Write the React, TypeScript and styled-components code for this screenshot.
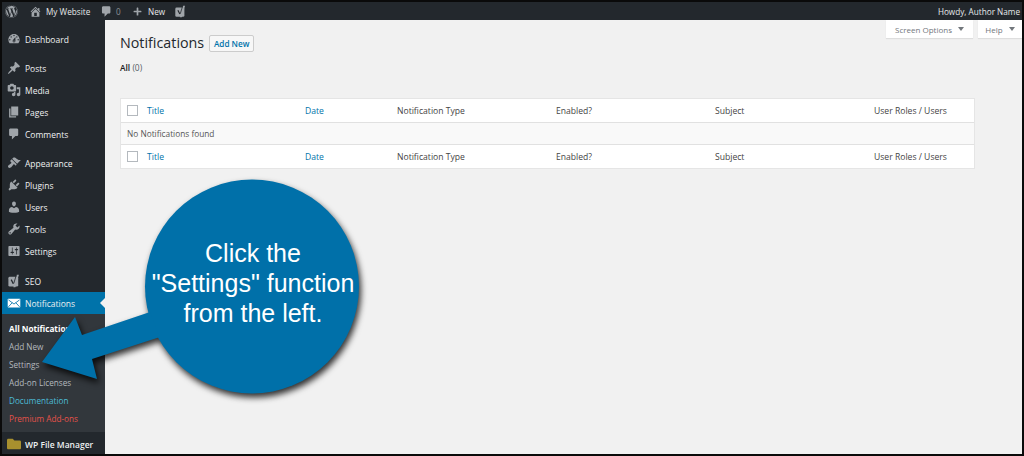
import React from 'react';
import styled, { createGlobalStyle } from 'styled-components';
import { FaWordpress, FaPlus, FaFolder } from 'react-icons/fa';

const GlobalStyle = createGlobalStyle`
  html, body {
    margin: 0;
    padding: 0;
    background: #000;
  }
  body {
    font-family: "Open Sans", "Liberation Sans", sans-serif;
    font-size: 8.6px;
  }
  * {
    box-sizing: border-box;
  }
`;

const Frame = styled.div`
  position: relative;
  width: 1024px;
  height: 456px;
  overflow: hidden;
  border: 2px solid #0a0a0a;
  display: flex;
  flex-direction: column;
  background: #f1f1f1;
`;

const AdminBar = styled.header`
  height: 18px;
  flex: none;
  background: #23282d;
  display: flex;
  align-items: center;
  padding: 0 2px 0 3px;
  font-size: 8.2px;
`;

const BarItem = styled.span<{ $gap?: number; $width?: number }>`
  display: flex;
  align-items: center;
  gap: ${(p) => p.$gap ?? 4}px;
  width: ${(p) => (p.$width ? `${p.$width}px` : 'auto')};
  color: #e6e8ea;
  svg {
    color: #a0a5aa;
    flex: none;
  }
`;

const Muted = styled.span`
  color: #8d9297;
`;

const Howdy = styled.span`
  margin-left: auto;
  color: #e6e8ea;
`;

const Body = styled.div`
  flex: 1;
  display: flex;
  min-height: 0;
`;

const Sidebar = styled.nav`
  width: 103px;
  flex: none;
  background: #23282d;
  padding-top: 8px;
`;

const MenuGroup = styled.div`
  margin-bottom: 7px;
  &:nth-child(3) {
    margin-bottom: 8px;
  }
`;

const MenuRow = styled.div<{ $active?: boolean }>`
  position: relative;
  height: 22px;
  display: flex;
  align-items: center;
  padding-left: 5px;
  gap: 4px;
  color: #eef0f1;
  font-size: 8.5px;
  white-space: nowrap;
  background: ${(p) => (p.$active ? '#0073aa' : 'transparent')};
  svg {
    flex: none;
    color: ${(p) => (p.$active ? '#fff' : '#a0a5aa')};
  }
  ${(p) =>
    p.$active &&
    `&::after {
      content: '';
      position: absolute;
      right: 0;
      top: 6px;
      border: 5px solid transparent;
      border-right-color: #f1f1f1;
      border-left-width: 0;
    }`}
`;

const SubMenu = styled.div`
  background: #32373c;
  padding: 5px 0 5px 7px;
`;

const SubItem = styled.div<{ $color?: string; $bold?: boolean }>`
  height: 18px;
  display: flex;
  align-items: center;
  font-size: 8.2px;
  white-space: nowrap;
  color: ${(p) => p.$color ?? '#b4b9be'};
  font-weight: ${(p) => (p.$bold ? 700 : 400)};
`;

const FileManagerRow = styled(MenuRow)`
  margin-top: 1px;
  font-weight: 600;
  font-size: 8.5px;
  svg {
    color: #a8902e;
  }
`;

const Main = styled.main`
  flex: 1;
  min-width: 0;
  padding-left: 15px;
  position: relative;
`;

const ScreenTabs = styled.div`
  display: flex;
  justify-content: flex-end;
  gap: 5px;
`;

const ScreenTab = styled.div<{ $width: number }>`
  width: ${(p) => p.$width}px;
  height: 18px;
  background: #fff;
  box-shadow: 0 1px 1px rgba(0, 0, 0, 0.08);
  color: #72777c;
  font-size: 8px;
  display: flex;
  align-items: center;
  justify-content: center;
  gap: 6px;
  &::after {
    content: '';
    border: 3px solid transparent;
    border-top: 4px solid #72777c;
    border-bottom-width: 0;
  }
`;

const TitleRow = styled.div`
  display: flex;
  align-items: center;
  gap: 5px;
  margin-top: -3px;
  height: 17px;
`;

const PageTitle = styled.h1`
  margin: 0 0 2px;
  font-size: 14.3px;
  font-weight: 400;
  color: #23282d;
`;

const AddNew = styled.span`
  height: 17px;
  width: 45px;
  display: flex;
  align-items: center;
  justify-content: center;
  background: #f7f7f7;
  border: 1px solid #ccc;
  border-radius: 2px;
  color: #0073aa;
  font-size: 8.2px;
  font-weight: 600;
`;

const Filter = styled.div`
  margin-top: 10px;
  height: 14px;
  font-size: 8.4px;
  color: #555d66;
  b {
    color: #222;
    font-weight: 600;
  }
`;

const Table = styled.section`
  margin-top: 22px;
  width: 855px;
  background: #fff;
  border: 1px solid #e5e5e5;
`;

const Row = styled.div<{ $top?: boolean }>`
  height: ${(p) => (p.$top ? 24 : 23)}px;
  display: grid;
  grid-template-columns: 26px 158px 92px 159px 159px 159px 1fr;
  align-items: center;
  font-size: 8.6px;
  color: #444;
  border-top: ${(p) => (p.$top ? '1px solid #e1e1e1' : 'none')};
`;

const EmptyRow = styled.div`
  height: 22px;
  display: flex;
  align-items: center;
  padding-left: 6px;
  background: #f9f9f9;
  color: #555;
  font-size: 8.3px;
  border-top: 1px solid #e1e1e1;
`;

const CheckCell = styled.span`
  width: 11px;
  height: 11px;
  margin-left: 6px;
  background: #fff;
  border: 1px solid #b4b9be;
`;

const ColLink = styled.span`
  color: #0073aa;
`;

const Overlay = styled.svg`
  position: absolute;
  left: -2px;
  top: -2px;
  width: 1024px;
  height: 456px;
  pointer-events: none;
  filter: drop-shadow(2px 4px 3px rgba(0, 0, 0, 0.8));
`;

const CalloutText = styled.div`
  position: absolute;
  left: 143px;
  top: 236px;
  width: 216px;
  text-align: center;
  color: #fff;
  font-family: "Liberation Sans", Arial, sans-serif;
  font-size: 25px;
  line-height: 30px;
  white-space: nowrap;
`;

// dashicon style glyphs, all on a 20x20 grid
const glyphs: Record<string, string> = {
  dashboard:
    'M3.76 16h12.48c1.1-1.37 1.76-3.11 1.76-5 0-4.42-3.58-8-8-8s-8 3.58-8 8c0 1.89.66 3.63 1.76 5zM10 4c.55 0 1 .45 1 1s-.45 1-1 1-1-.45-1-1 .45-1 1-1zM6 6c.55 0 1 .45 1 1s-.45 1-1 1-1-.45-1-1 .45-1 1-1zm8 0c.55 0 1 .45 1 1s-.45 1-1 1-1-.45-1-1 .45-1 1-1zm-5.37 5.55L12 7v6c0 1.1-.9 2-2 2s-2-.9-2-2c0-.57.24-1.08.63-1.45zM4 10c.55 0 1 .45 1 1s-.45 1-1 1-1-.45-1-1 .45-1 1-1zm12 0c.55 0 1 .45 1 1s-.45 1-1 1-1-.45-1-1 .45-1 1-1zm-5 3c0-.55-.45-1-1-1s-1 .45-1 1 .45 1 1 1 1-.45 1-1z',
  post: 'M10.44 3.02l1.82-1.82 6.36 6.35-1.83 1.82c-1.05-.68-2.48-.57-3.41.36l-.75.75c-.92.93-1.04 2.35-.35 3.41l-1.83 1.82-2.41-2.41-2.8 2.79c-.42.42-3.38 2.71-3.8 2.29s1.86-3.39 2.28-3.81l2.79-2.79L4.1 9.36l1.83-1.82c1.05.69 2.48.57 3.4-.36l.75-.75c.93-.92 1.05-2.35.36-3.41z',
  media:
    'M13 11V4c0-.55-.45-1-1-1h-1.67L9 1H5L3.67 3H2c-.55 0-1 .45-1 1v7c0 .55.45 1 1 1h10c.55 0 1-.45 1-1zM7 4.5c1.38 0 2.5 1.12 2.5 2.5S8.38 9.5 7 9.5 4.5 8.38 4.5 7 5.62 4.5 7 4.5zM14 6h5v10.5c0 1.38-1.12 2.5-2.5 2.5S14 17.88 14 16.5s1.12-2.5 2.5-2.5c.17 0 .34.02.5.05V9h-3V6zm-4 8.05V13h2v3.5c0 1.38-1.12 2.5-2.5 2.5S7 17.88 7 16.5 8.12 14 9.5 14c.17 0 .34.02.5.05z',
  page: 'M6 15V2h10v13H6zm-1 1h8v2H3V5h2v11z',
  comment:
    'M5 2h9c1.1 0 2 .9 2 2v7c0 1.1-.9 2-2 2h-2l-5 5v-5H5c-1.1 0-2-.9-2-2V4c0-1.1.9-2 2-2z',
  appearance:
    'M14.48 11.06L7.41 3.99l1.5-1.5c.5-.56 2.3-.47 3.51.32 1.21.8 1.43 1.28 2.91 2.1 1.18.64 2.45 1.26 4.45.85zm-.71.71L6.7 4.7 4.93 6.47c-.39.39-.39 1.02 0 1.41l1.06 1.06c.39.39.39 1.03 0 1.42-.6.6-1.43 1.11-2.21 1.69-.35.26-.7.53-1.01.84C1.43 13.23.99 15.3 2.05 16.45c1.31 1.42 3.65 0 4.62-1.06.31-.31.57-.66.84-1.01.57-.8 1.07-1.61 1.69-2.21.39-.39 1.02-.39 1.41 0l1.06 1.06c.39.39 1.02.39 1.41 0z',
  plugin:
    'M13.11 4.36L9.87 7.6 8 5.73l3.24-3.24c.35-.34 1.05-.2 1.56.32.52.51.66 1.21.31 1.55zm-8 1.77l.91-1.12 9.01 9.01-1.19.84c-.71.71-2.63 1.16-3.82 1.16H6.14L4.9 17.26c-.59.59-1.54.59-2.12 0-.59-.58-.59-1.53 0-2.12l1.24-1.24v-3.88c0-1.13.4-3.19 1.09-3.89zm7.26 3.97l3.24-3.24c.34-.35 1.04-.21 1.55.31.52.51.66 1.21.31 1.55l-3.24 3.25z',
  users:
    'M10 9.25c-2.27 0-2.73-3.44-2.73-3.44C7 4.02 7.82 2 9.97 2c2.16 0 2.98 2.02 2.71 3.81 0 0-.41 3.44-2.68 3.44zm0 2.57L12.72 10c2.39 0 4.52 2.33 4.52 4.53v2.49s-3.65 1.13-7.24 1.13c-3.65 0-7.24-1.13-7.24-1.13v-2.49c0-2.25 1.94-4.48 4.47-4.48z',
  tools:
    'M16.68 9.77c-1.34 1.34-3.3 1.67-4.95.99l-5.41 6.52c-.99.99-2.59.99-3.58 0s-.99-2.59 0-3.57l6.52-5.42c-.68-1.65-.35-3.61.99-4.95 1.28-1.28 3.12-1.62 4.72-1.06l-2.89 2.89 2.82 2.82 2.86-2.87c.53 1.58.18 3.39-1.08 4.65zM3.81 16.21c.4.39 1.04.39 1.43 0 .4-.4.4-1.04 0-1.43-.39-.4-1.03-.4-1.43 0-.39.39-.39 1.03 0 1.43z',
  settings:
    'M18 16V4c0-.55-.45-1-1-1H3c-.55 0-1 .45-1 1v12c0 .55.45 1 1 1h14c.55 0 1-.45 1-1zM8 11h1c.55 0 1 .45 1 1s-.45 1-1 1H8v1.5c0 .28-.22.5-.5.5s-.5-.22-.5-.5V13H6c-.55 0-1-.45-1-1s.45-1 1-1h1V5.5c0-.28.22-.5.5-.5s.5.22.5.5V11zm5-2h-1c-.55 0-1-.45-1-1s.45-1 1-1h1V5.5c0-.28.22-.5.5-.5s.5.22.5.5V7h1c.55 0 1 .45 1 1s-.45 1-1 1h-1v5.5c0 .28-.22.5-.5.5s-.5-.22-.5-.5V9z',
  home: 'M16 8.5l1.53 1.53-1.06 1.06L10 4.62l-6.47 6.47-1.06-1.06L10 2.5l4 4v-2h2v4zm-6-2.46l6 5.99V18H4v-5.97zM12 17v-5H8v5h4z',
};

const Glyph = ({ name, size = 14 }: { name: string; size?: number }) => (
  <svg width={size} height={size} viewBox="0 0 20 20" fill="currentColor">
    <path fillRule="evenodd" d={glyphs[name]} />
  </svg>
);

const YoastMark = ({ size = 14 }: { size?: number }) => (
  <svg width={size} height={size} viewBox="0 0 20 20">
    <rect x="2" y="4" width="14" height="14" rx="2" fill="currentColor" />
    <path d="M6 8l3 6" stroke="#23282d" strokeWidth="1.8" fill="none" />
    <path d="M14 1h3l-5 18h-3z" fill="currentColor" />
    <path d="M9.6 13.5L13.2 2" stroke="#23282d" strokeWidth="1.2" fill="none" />
  </svg>
);

const MailGlyph = () => (
  <svg width={14} height={14} viewBox="0 0 20 20">
    <rect x="1" y="4" width="18" height="12.5" rx="1" fill="currentColor" />
    <path
      d="M2 5.5l8 6 8-6M2 15.5l5.5-6M18 15.5l-5.5-6"
      stroke="#0073aa"
      strokeWidth="1.2"
      fill="none"
    />
  </svg>
);

const topMenu: [string, string][] = [['dashboard', 'Dashboard']];
const contentMenu: [string, string][] = [
  ['post', 'Posts'],
  ['media', 'Media'],
  ['page', 'Pages'],
  ['comment', 'Comments'],
];
const adminMenu: [string, string][] = [
  ['appearance', 'Appearance'],
  ['plugin', 'Plugins'],
  ['users', 'Users'],
  ['tools', 'Tools'],
  ['settings', 'Settings'],
];

const MenuList = ({ items }: { items: [string, string][] }) => (
  <MenuGroup>
    {items.map(([icon, label]) => (
      <MenuRow key={label}>
        <Glyph name={icon} />
        {label}
      </MenuRow>
    ))}
  </MenuGroup>
);

const Columns = ({ top }: { top?: boolean }) => (
  <Row $top={top}>
    <CheckCell />
    <ColLink>Title</ColLink>
    <ColLink>Date</ColLink>
    <span>Notification Type</span>
    <span>Enabled?</span>
    <span>Subject</span>
    <span>User Roles / Users</span>
  </Row>
);

const App = () => {
  return (
    <>
      <GlobalStyle />
      <Frame>
        <AdminBar>
          <BarItem $width={24}>
            <FaWordpress size={13} />
          </BarItem>
          <BarItem $width={71}>
            <Glyph name="home" size={13} />
            My Website
          </BarItem>
          <BarItem $width={33} $gap={3}>
            <Glyph name="comment" size={13} />
            <Muted>0</Muted>
          </BarItem>
          <BarItem $width={41} $gap={6}>
            <FaPlus size={9} />
            New
          </BarItem>
          <BarItem>
            <YoastMark size={13} />
          </BarItem>
          <Howdy>Howdy, Author Name</Howdy>
        </AdminBar>
        <Body>
          <Sidebar>
            <MenuList items={topMenu} />
            <MenuList items={contentMenu} />
            <MenuList items={adminMenu} />
            <MenuRow>
              <YoastMark />
              SEO
            </MenuRow>
            <MenuRow $active>
              <MailGlyph />
              Notifications
            </MenuRow>
            <SubMenu>
              <SubItem $bold $color="#fff">All Notifications</SubItem>
              <SubItem>Add New</SubItem>
              <SubItem>Settings</SubItem>
              <SubItem>Add-on Licenses</SubItem>
              <SubItem $color="#4cbcd6">Documentation</SubItem>
              <SubItem $color="#e4524a">Premium Add-ons</SubItem>
            </SubMenu>
            <FileManagerRow>
              <FaFolder size={14} />
              WP File Manager
            </FileManagerRow>
          </Sidebar>
          <Main>
            <ScreenTabs>
              <ScreenTab $width={87}>Screen Options</ScreenTab>
              <ScreenTab $width={44}>Help</ScreenTab>
            </ScreenTabs>
            <TitleRow>
              <PageTitle>Notifications</PageTitle>
              <AddNew>Add New</AddNew>
            </TitleRow>
            <Filter>
              <b>All</b> (0)
            </Filter>
            <Table>
              <Columns />
              <EmptyRow>No Notifications found</EmptyRow>
              <Columns top />
            </Table>
          </Main>
        </Body>
        <Overlay viewBox="0 0 1024 456">
          <circle cx="252" cy="286.5" r="107" fill="#0070a9" />
          <polygon
            points="42,362 75,317 82,335 150,312 160,337 92,359 97,379"
            fill="#0070a9"
          />
        </Overlay>
        <CalloutText>
          Click the
          <br />
          "Settings" function
          <br />
          from the left.
        </CalloutText>
      </Frame>
    </>
  );
};

export default App;
